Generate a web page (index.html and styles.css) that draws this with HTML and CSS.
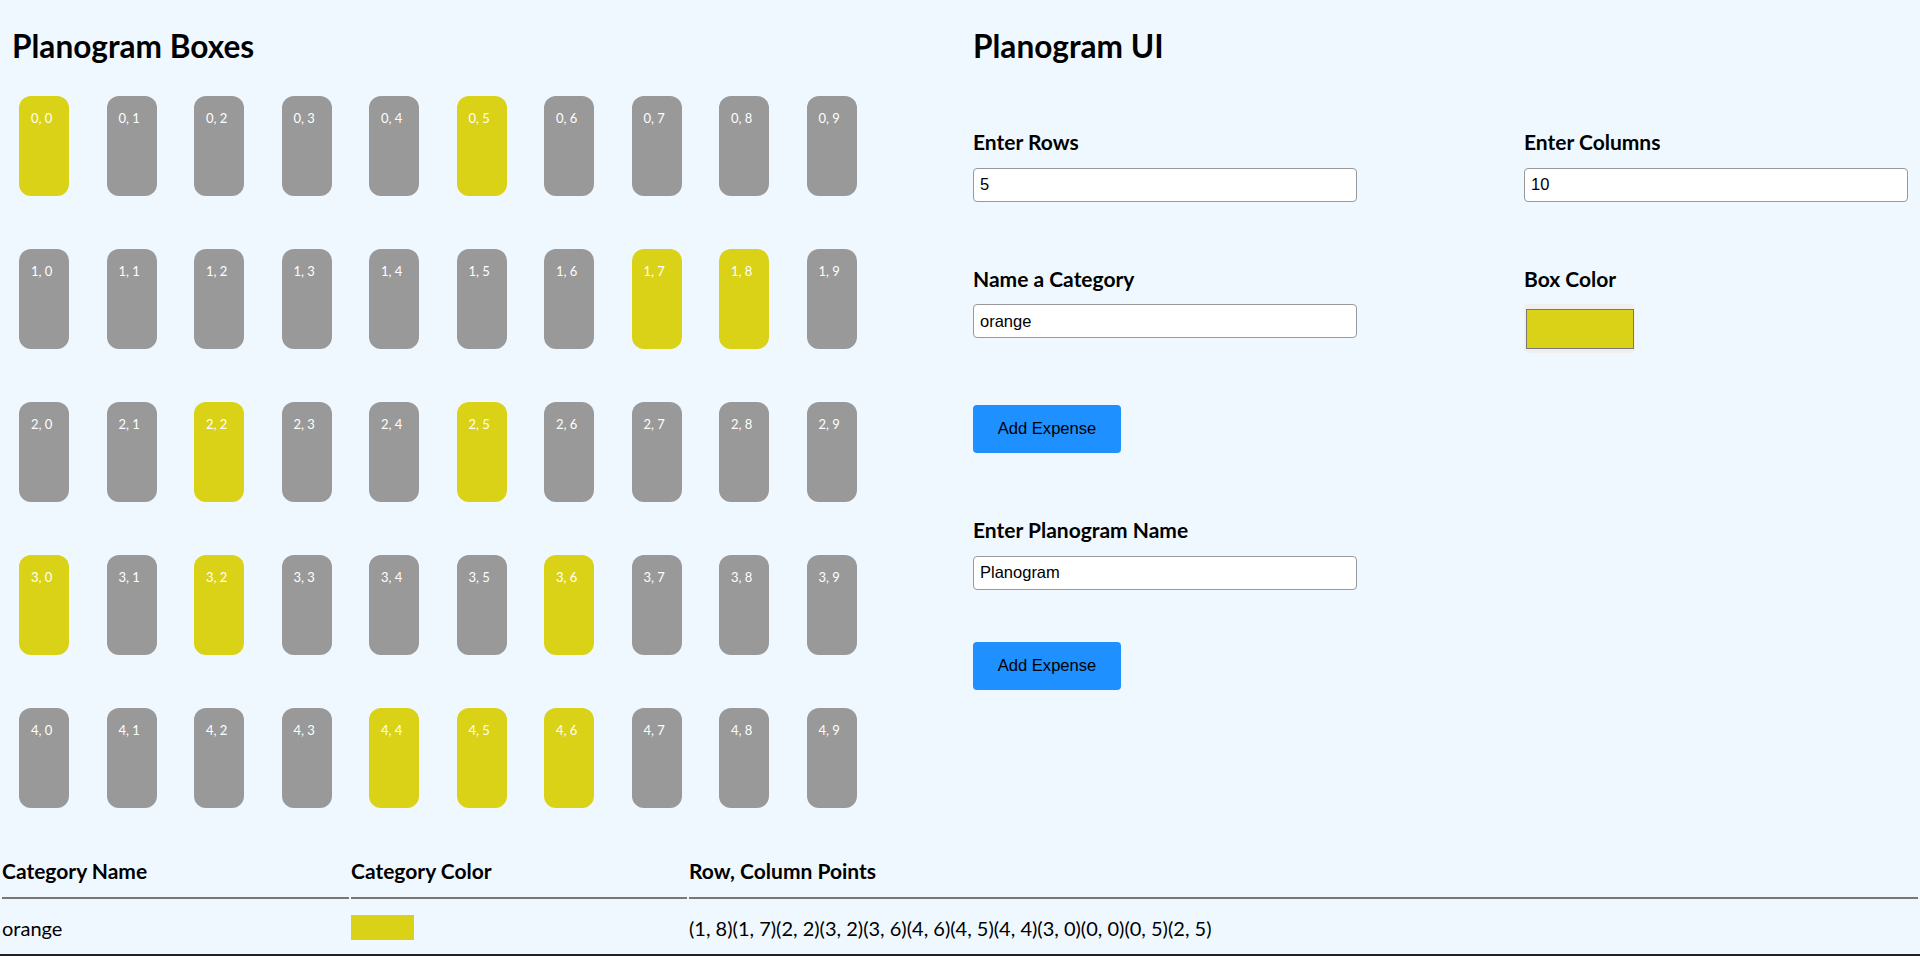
FILE: index.html
```html
<!DOCTYPE html>
<html>
<head>
<meta charset="utf-8">
<title>Planogram</title>
<link rel="stylesheet" href="styles.css">
</head>
<body>
<div class="top">
  <section class="left">
    <h1 class="title">Planogram Boxes</h1>
    <div class="grid">
      <div class="box on">0, 0</div><div class="box">0, 1</div><div class="box">0, 2</div><div class="box">0, 3</div><div class="box">0, 4</div><div class="box on">0, 5</div><div class="box">0, 6</div><div class="box">0, 7</div><div class="box">0, 8</div><div class="box">0, 9</div>
      <div class="box">1, 0</div><div class="box">1, 1</div><div class="box">1, 2</div><div class="box">1, 3</div><div class="box">1, 4</div><div class="box">1, 5</div><div class="box">1, 6</div><div class="box on">1, 7</div><div class="box on">1, 8</div><div class="box">1, 9</div>
      <div class="box">2, 0</div><div class="box">2, 1</div><div class="box on">2, 2</div><div class="box">2, 3</div><div class="box">2, 4</div><div class="box on">2, 5</div><div class="box">2, 6</div><div class="box">2, 7</div><div class="box">2, 8</div><div class="box">2, 9</div>
      <div class="box on">3, 0</div><div class="box">3, 1</div><div class="box on">3, 2</div><div class="box">3, 3</div><div class="box">3, 4</div><div class="box">3, 5</div><div class="box on">3, 6</div><div class="box">3, 7</div><div class="box">3, 8</div><div class="box">3, 9</div>
      <div class="box">4, 0</div><div class="box">4, 1</div><div class="box">4, 2</div><div class="box">4, 3</div><div class="box on">4, 4</div><div class="box on">4, 5</div><div class="box on">4, 6</div><div class="box">4, 7</div><div class="box">4, 8</div><div class="box">4, 9</div>
    </div>
  </section>
  <section class="right">
    <h1 class="title">Planogram UI</h1>
    <div class="pair">
      <div class="field">
        <label class="label">Enter Rows</label>
        <input class="text-input" type="text" value="5">
      </div>
      <div class="field">
        <label class="label">Enter Columns</label>
        <input class="text-input" type="text" value="10">
      </div>
    </div>
    <div class="pair section">
      <div class="field">
        <label class="label">Name a Category</label>
        <input class="text-input" type="text" value="orange">
      </div>
      <div class="field">
        <label class="label">Box Color</label>
        <div class="color-picker"><div class="color-swatch"></div></div>
      </div>
    </div>
    <button class="btn" type="button">Add Expense</button>
    <div class="field section">
      <label class="label">Enter Planogram Name</label>
      <input class="text-input" type="text" value="Planogram">
    </div>
    <button class="btn" type="button">Add Expense</button>
  </section>
</div>
<table class="cat-table">
  <colgroup><col class="c1"><col class="c2"><col></colgroup>
  <thead>
    <tr><th>Category Name</th><th>Category Color</th><th>Row, Column Points</th></tr>
  </thead>
  <tbody>
    <tr><td>orange</td><td><div class="cat-swatch"></div></td><td>(1, 8)(1, 7)(2, 2)(3, 2)(3, 6)(4, 6)(4, 5)(4, 4)(3, 0)(0, 0)(0, 5)(2, 5)</td></tr>
  </tbody>
</table>
<div class="bottom-rule"></div>
</body>
</html>
```
FILE: styles.css
```css
* { box-sizing: border-box; }

body {
  margin: 0;
  background: #f0f8ff;
  font-family: Lato, "Liberation Sans", sans-serif;
  color: #000;
}

.top {
  display: flex;
  padding-top: 28px;
}

.left {
  width: 960px;
  padding-left: 12px;
}

.right {
  flex: 1;
  padding-left: 13px;
}

.title {
  margin: 0;
  font-size: 31.6px;
  line-height: 36px;
  font-weight: 700;
}

.grid {
  margin: 32px 0 0 7px;
  display: grid;
  grid-template-columns: repeat(10, 50px);
  column-gap: 37.5px;
  row-gap: 53px;
}

.box {
  width: 50px;
  height: 100px;
  border-radius: 12px;
  background: #999999;
  color: #fff;
  font-size: 13px;
  line-height: 15.6px;
  padding: 14.5px 0 0 12px;
}

.box.on { background: #dad216; }

.pair {
  display: grid;
  grid-template-columns: 551px 1fr;
  margin-top: 66px;
}

.section { margin-top: 65px; }

.field {
  display: flex;
  flex-direction: column;
  align-items: flex-start;
}

.label {
  font-size: 21px;
  line-height: 24px;
  font-weight: 700;
  margin-bottom: 13.5px;
}

.text-input {
  width: 384px;
  height: 34px;
  border: 1px solid #999;
  border-radius: 4px;
  background: #fff;
  padding: 0 6px;
  font-family: "Liberation Sans", Arial, sans-serif;
  font-size: 16.5px;
  color: #000;
  outline: none;
}

.color-picker {
  width: 111px;
  height: 49px;
  background: #efefef;
  border-radius: 4px;
  padding: 5px 1px 4px 2px;
}

.color-swatch {
  width: 108px;
  height: 40px;
  background: #dad216;
  border: 1px solid #777;
}

.btn {
  display: block;
  margin-top: 52px;
  width: 148px;
  height: 48px;
  border: none;
  border-radius: 4px;
  background: #1e90ff;
  color: #000;
  font-family: "Liberation Sans", Arial, sans-serif;
  font-size: 16.6px;
  padding: 0;
}

.cat-table {
  margin-top: 35px;
  width: 1920px;
  table-layout: fixed;
  border-spacing: 2px;
  font-size: 20px;
}

.c1 { width: 347px; }
.c2 { width: 336px; }

.cat-table th {
  text-align: left;
  font-size: 21px;
  font-weight: 700;
  line-height: 24px;
  padding: 14px 0;
  border-bottom: 2px solid #777;
}

.cat-table td {
  padding: 14px 0 12px;
  line-height: 24px;
  vertical-align: middle;
}

.cat-swatch {
  width: 63px;
  height: 25px;
  background: #dad216;
}

.bottom-rule {
  border-top: 3px solid #222;
}
```
